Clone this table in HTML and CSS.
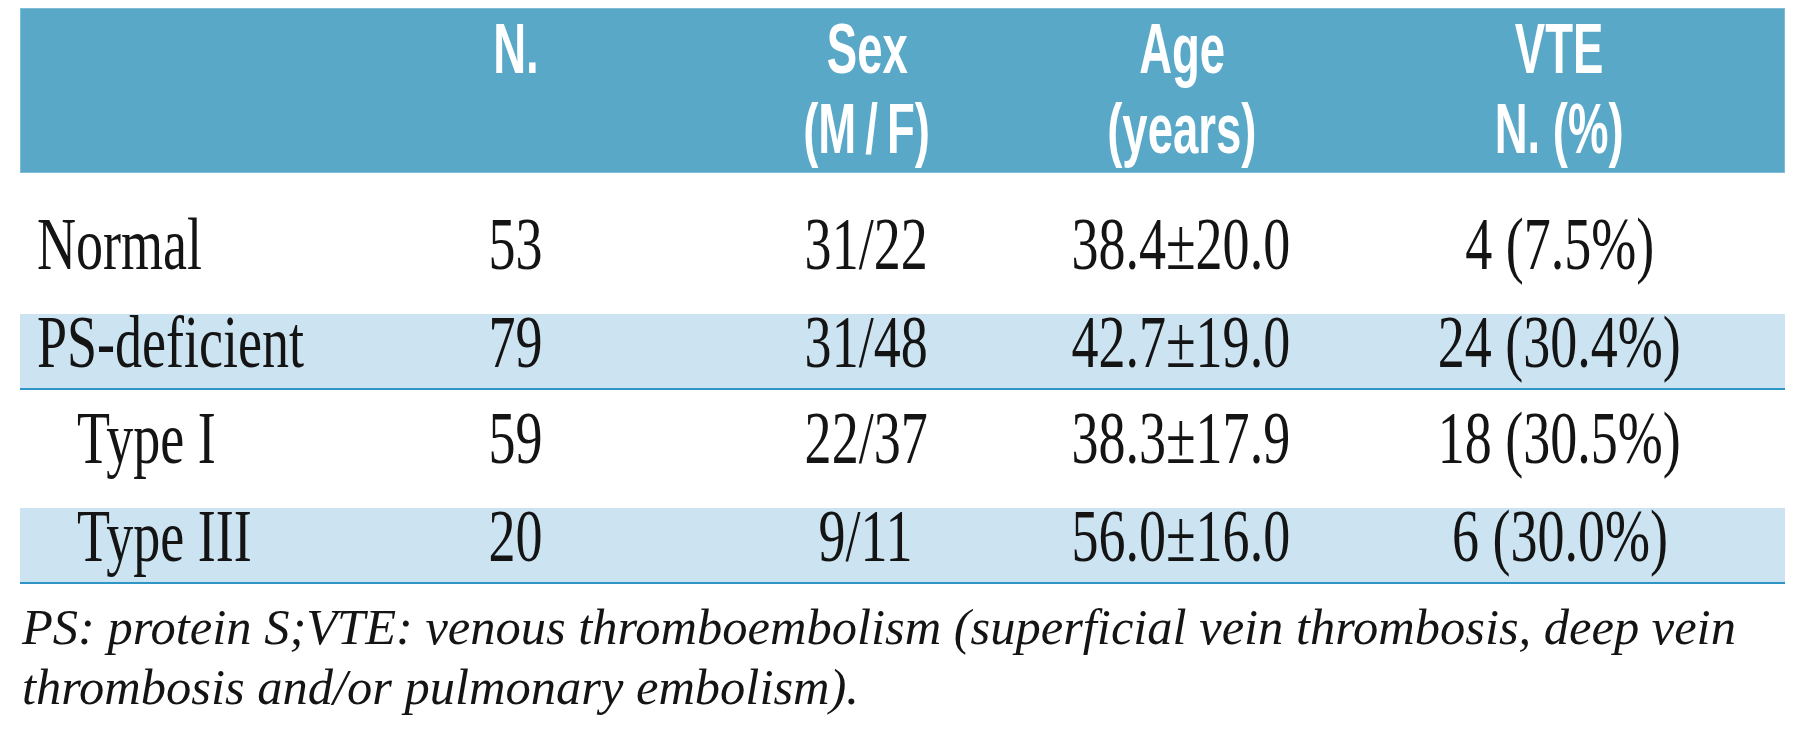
FILE: index.html
```html
<!DOCTYPE html>
<html lang="en">
<head>
<meta charset="utf-8">
<title>Protein S deficiency table</title>
<link rel="stylesheet" href="styles.css">
</head>
<body>
<div class="page">
  <div class="table">
    <div class="row head">
      <div class="cell label"></div>
      <div class="cell"><span class="h">N.</span></div>
      <div class="cell"><span class="h">Sex</span><span class="h">(M&thinsp;/&thinsp;F)</span></div>
      <div class="cell"><span class="h">Age</span><span class="h">(years)</span></div>
      <div class="cell vte"><span class="h">VTE</span><span class="h">N. (%)</span></div>
    </div>
    <div class="row body r-normal">
      <div class="cell label"><span class="t l">Normal</span></div>
      <div class="cell"><span class="t">53</span></div>
      <div class="cell"><span class="t">31/22</span></div>
      <div class="cell"><span class="t">38.4±20.0</span></div>
      <div class="cell vte"><span class="t">4 (7.5%)</span></div>
    </div>
    <div class="row body band">
      <div class="cell label"><span class="t l">PS-deficient</span></div>
      <div class="cell"><span class="t">79</span></div>
      <div class="cell"><span class="t">31/48</span></div>
      <div class="cell"><span class="t">42.7±19.0</span></div>
      <div class="cell vte"><span class="t">24 (30.4%)</span></div>
    </div>
    <div class="row body r-type1">
      <div class="cell label sub"><span class="t l">Type I</span></div>
      <div class="cell"><span class="t">59</span></div>
      <div class="cell"><span class="t">22/37</span></div>
      <div class="cell"><span class="t">38.3±17.9</span></div>
      <div class="cell vte"><span class="t">18 (30.5%)</span></div>
    </div>
    <div class="row body band">
      <div class="cell label sub"><span class="t l">Type III</span></div>
      <div class="cell"><span class="t">20</span></div>
      <div class="cell"><span class="t">9/11</span></div>
      <div class="cell"><span class="t">56.0±16.0</span></div>
      <div class="cell vte"><span class="t">6 (30.0%)</span></div>
    </div>
  </div>
  <p class="note">PS: protein S;VTE: venous thromboembolism (superficial vein thrombosis, deep vein<br>thrombosis and/or pulmonary embolism).</p>
</div>
</body>
</html>
```

FILE: styles.css
```css
html, body {
  margin: 0;
  padding: 0;
  background: #ffffff;
}

.page {
  padding: 8px 0 0 20px;
  width: 1765px;
}

.table {
  width: 1765px;
}

.row {
  display: grid;
  grid-template-columns: 320px 350px 352px 278px 1fr;
  box-sizing: border-box;
}

.cell {
  display: flex;
  flex-direction: column;
  align-items: center;
  justify-content: flex-start;
}

.cell.vte {
  padding-left: 14px;
}

.cell.label {
  align-items: flex-start;
  padding-left: 17px;
}

.cell.label.sub {
  padding-left: 57px;
}

/* header */
.head {
  background: #59a8c8;
  border: 1px solid #7fbcd6;
  height: 165px;
  padding-top: 0;
  font-family: "Liberation Sans", Arial, sans-serif;
  font-weight: 700;
  font-size: 70px;
  line-height: 80px;
  color: #ffffff;
}

.h {
  display: inline-block;
  white-space: nowrap;
  transform: scaleX(0.65);
  transform-origin: center;
}

/* body rows */
.body {
  font-family: "Liberation Serif", "Times New Roman", serif;
  font-size: 73px;
  line-height: 57px;
  color: #141414;
}

.t {
  display: inline-block;
  white-space: nowrap;
  transform: scaleX(0.74);
  transform-origin: center;
}

.t.l {
  transform-origin: left center;
}

.r-normal {
  margin-top: 43px;
  height: 98px;
}

.band {
  background: #cce4f2;
  height: 76px;
  border-bottom: 2px solid #2f95c4;
}

.r-type1 {
  height: 118px;
  padding-top: 20px;
}

/* footnote */
.note {
  margin: 13px 0 0 0;
  padding-left: 2px;
  font-family: "Liberation Serif", "Times New Roman", serif;
  font-style: italic;
  font-size: 50.5px;
  line-height: 60px;
  color: #141414;
  white-space: nowrap;
}
```
